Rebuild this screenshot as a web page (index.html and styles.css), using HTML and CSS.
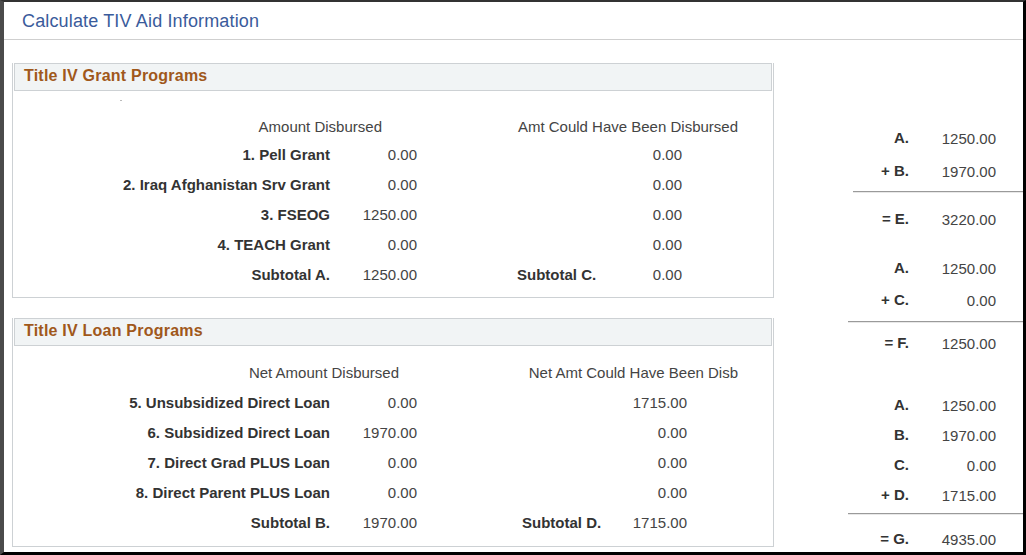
FILE: index.html
```html
<!DOCTYPE html>
<html lang="en">
<head>
<meta charset="utf-8">
<title>Calculate TIV Aid Information</title>
<link rel="stylesheet" href="styles.css">
</head>
<body>
<div class="frame">
  <header class="title-bar">
    <h1 class="title">Calculate TIV Aid Information</h1>
  </header>
  <main class="main">
    <div class="left">
      <section class="box">
        <div class="box-head">Title IV Grant Programs</div>
        <div class="box-body body-grant">
          <div class="spacer"><span class="dot"></span></div>
          <div class="grid grid-grant">
            <div class="colhead h1 h1-grant">Amount Disbursed</div>
            <div class="colhead h2">Amt Could Have Been Disbursed</div>

            <div class="lbl">1. Pell Grant</div><div class="val">0.00</div><div class="lbl2"></div><div class="val2">0.00</div>
            <div class="lbl">2. Iraq Afghanistan Srv Grant</div><div class="val">0.00</div><div class="lbl2"></div><div class="val2">0.00</div>
            <div class="lbl">3. FSEOG</div><div class="val">1250.00</div><div class="lbl2"></div><div class="val2">0.00</div>
            <div class="lbl">4. TEACH Grant</div><div class="val">0.00</div><div class="lbl2"></div><div class="val2">0.00</div>
            <div class="lbl">Subtotal A.</div><div class="val">1250.00</div><div class="lbl2">Subtotal C.</div><div class="val2">0.00</div>
          </div>
        </div>
      </section>

      <section class="box box-loan">
        <div class="box-head">Title IV Loan Programs</div>
        <div class="box-body body-loan">
          <div class="grid grid-loan">
            <div class="colhead h1 h1-loan">Net Amount Disbursed</div>
            <div class="colhead h2">Net Amt Could Have Been Disb</div>

            <div class="lbl">5. Unsubsidized Direct Loan</div><div class="val">0.00</div><div class="lbl2"></div><div class="val2">1715.00</div>
            <div class="lbl">6. Subsidized Direct Loan</div><div class="val">1970.00</div><div class="lbl2"></div><div class="val2">0.00</div>
            <div class="lbl">7. Direct Grad PLUS Loan</div><div class="val">0.00</div><div class="lbl2"></div><div class="val2">0.00</div>
            <div class="lbl">8. Direct Parent PLUS Loan</div><div class="val">0.00</div><div class="lbl2"></div><div class="val2">0.00</div>
            <div class="lbl">Subtotal B.</div><div class="val">1970.00</div><div class="lbl2">Subtotal D.</div><div class="val2">1715.00</div>
          </div>
        </div>
      </section>
    </div>

    <aside class="calc">
      <div class="crow r-a1"><span class="clbl">A.</span><span class="cval">1250.00</span></div>
      <div class="crow r-b1"><span class="clbl">+ B.</span><span class="cval">1970.00</span></div>
      <div class="rule rule-1"></div>
      <div class="crow r-e"><span class="clbl">= E.</span><span class="cval">3220.00</span></div>

      <div class="crow r-a2"><span class="clbl">A.</span><span class="cval">1250.00</span></div>
      <div class="crow r-c1"><span class="clbl">+ C.</span><span class="cval">0.00</span></div>
      <div class="rule rule-2"></div>
      <div class="crow r-f"><span class="clbl">= F.</span><span class="cval">1250.00</span></div>

      <div class="crow r-a3"><span class="clbl">A.</span><span class="cval">1250.00</span></div>
      <div class="crow"><span class="clbl">B.</span><span class="cval">1970.00</span></div>
      <div class="crow"><span class="clbl">C.</span><span class="cval">0.00</span></div>
      <div class="crow"><span class="clbl">+ D.</span><span class="cval">1715.00</span></div>
      <div class="rule rule-3"></div>
      <div class="crow r-g"><span class="clbl">= G.</span><span class="cval">4935.00</span></div>
    </aside>
  </main>
</div>
</body>
</html>
```

FILE: styles.css
```css
* { box-sizing: border-box; }

html, body {
  margin: 0;
  padding: 0;
  background: #ffffff;
}

body {
  font-family: "Liberation Sans", Arial, sans-serif;
  font-size: 15px;
  color: #444;
}

.frame {
  width: 1026px;
  height: 555px;
  border-left: 4px solid #4b4b4b;
  border-top: 2px solid #333;
  border-right: 3px solid #000;
  border-bottom: 3px solid #000;
  background: #fff;
  overflow: hidden;
  display: flex;
  flex-direction: column;
}

.title-bar {
  height: 38px;
  border-bottom: 1px solid #cfcfcf;
  padding-left: 18px;
  padding-top: 1px;
  flex: none;
}

.title {
  margin: 0;
  font-size: 18px;
  font-weight: normal;
  line-height: 36px;
  letter-spacing: 0.15px;
  color: #3a5b9b;
}

.main {
  flex: 1;
  display: flex;
  overflow: hidden;
}

.left {
  flex: none;
  width: 770px;
  padding-left: 8px;
  padding-top: 23px;
}

.box {
  width: 762px;
  border: 1px solid #cdd1d4;
  border-top: none;
}

.box-loan {
  margin-top: 20px;
}

.box-head {
  margin: 0 1px;
  height: 28px;
  border: 1px solid #cdd1d4;
  background: #f1f4f5;
  padding-left: 9px;
  font-size: 16px;
  font-weight: bold;
  line-height: 24px;
  letter-spacing: 0.22px;
  color: #a0581b;
}

.body-grant {
  padding-bottom: 8px;
}

.body-loan {
  padding-top: 11px;
  padding-bottom: 9px;
}

.spacer {
  height: 23px;
  padding-left: 107px;
  padding-top: 9px;
}

.dot {
  display: block;
  width: 2px;
  height: 1px;
  background: #bbb;
}

.grid {
  display: grid;
  grid-auto-rows: 30px;
  align-items: center;
}

.grid-grant {
  grid-template-columns: 317px 87px 100px 80px 85px 56px;
  grid-template-rows: 25px;
}

.grid-loan {
  grid-template-columns: 317px 87px 105px 78px 87px 51px;
  grid-template-rows: 30px;
}

.colhead {
  white-space: nowrap;
  text-align: right;
  color: #444;
}

.h1 { grid-column: 1 / 3; }
.h1-grant { padding-right: 35px; }
.h1-loan { padding-right: 18px; }
.h2 { grid-column: 4 / 7; }

.lbl {
  grid-column: 1;
  text-align: right;
  font-weight: bold;
  color: #333;
  white-space: nowrap;
}

.val {
  grid-column: 2;
  text-align: right;
  color: #444;
}

.lbl2 {
  grid-column: 4;
  font-weight: bold;
  color: #333;
  white-space: nowrap;
}

.val2 {
  grid-column: 5;
  text-align: right;
  color: #444;
}

/* calculation panel */
.calc {
  flex: 1;
  padding-top: 82px;
  display: flex;
  flex-direction: column;
}

.crow {
  height: 30px;
  display: flex;
  align-items: center;
  flex: none;
}

.clbl {
  width: 135px;
  text-align: right;
  font-weight: bold;
  color: #333;
}

.cval {
  width: 87px;
  text-align: right;
  color: #444;
  padding-top: 3px;
}

.r-b1 { margin-top: 3px; }
.r-e { margin-top: 10px; }
.r-a2 { margin-top: 19px; }
.r-c1 { margin-top: 2px; }
.r-f { margin-top: 4px; }
.r-a3 { margin-top: 32px; }
.r-g { margin-top: 8px; }

.rule {
  flex: none;
  height: 2px;
  border-top: 1px solid #9a9a9a;
  border-bottom: 1px solid #e8e8e8;
}

.rule-1 { margin-left: 79px; margin-top: 6px; }
.rule-2 { margin-left: 74px; margin-top: 7px; }
.rule-3 { margin-left: 74px; margin-top: 4px; }
```
